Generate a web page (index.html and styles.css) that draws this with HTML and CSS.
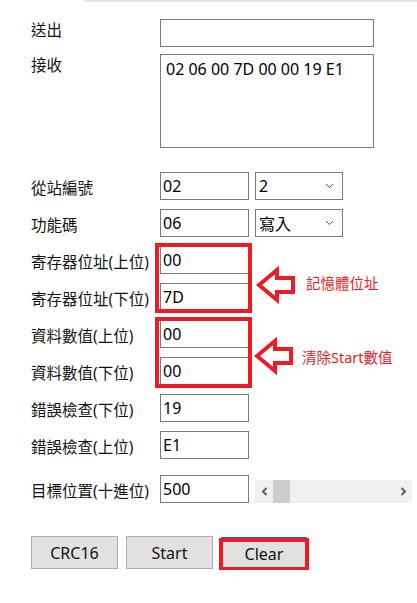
FILE: index.html
```html
<!DOCTYPE html>
<html lang="zh-Hant">
<head>
    <meta charset="UTF-8">
    <meta name="viewport" content="width=device-width, initial-scale=1.0">
    <title>Modbus RTU</title>
    <link rel="stylesheet" href="styles.css">
</head>
<body>
    <div class="topline"></div>
    <form class="panel">
        <div class="row first">
            <span class="lbl top">送出</span>
            <input type="text" class="wide">
        </div>
        <div class="row tall">
            <span class="lbl top">接收</span>
            <textarea class="wide">02 06 00 7D 00 00 19 E1</textarea>
        </div>

        <div class="row after-tall">
            <span class="lbl">從站編號</span>
            <input type="text" value="02">
            <div class="select"><span>2</span><svg width="9" height="6" viewBox="0 0 9 6"><path d="M1 1 L4.5 4.5 L8 1" fill="none" stroke="#555" stroke-width="1"/></svg></div>
        </div>
        <div class="row">
            <span class="lbl">功能碼</span>
            <input type="text" value="06">
            <div class="select"><span>寫入</span><svg width="9" height="6" viewBox="0 0 9 6"><path d="M1 1 L4.5 4.5 L8 1" fill="none" stroke="#555" stroke-width="1"/></svg></div>
        </div>

        <div class="group">
            <span class="lbl">寄存器位址(上位)</span>
            <input type="text" value="00" class="in-a">
            <span class="lbl">寄存器位址(下位)</span>
            <input type="text" value="7D" class="in-b">
            <div class="frame"></div>
            <div class="note">
                <svg width="44" height="38" viewBox="0 0 44 38"><polygon points="6,19 24,4 24,12 40,12 40,26 24,26 24,34" fill="none" stroke="#ed1c24" stroke-width="4"/></svg>
                <span>記憶體位址</span>
            </div>
        </div>

        <div class="group second">
            <span class="lbl">資料數值(上位)</span>
            <input type="text" value="00" class="in-a">
            <span class="lbl">資料數值(下位)</span>
            <input type="text" value="00" class="in-b">
            <div class="frame"></div>
            <div class="note">
                <svg width="44" height="38" viewBox="0 0 44 38"><polygon points="6,19 24,4 24,12 40,12 40,26 24,26 24,34" fill="none" stroke="#ed1c24" stroke-width="4"/></svg>
                <span>清除Start數值</span>
            </div>
        </div>

        <div class="row">
            <span class="lbl">錯誤檢查(下位)</span>
            <input type="text" value="19">
        </div>
        <div class="row">
            <span class="lbl">錯誤檢查(上位)</span>
            <input type="text" value="E1">
        </div>
        <div class="row last">
            <span class="lbl">目標位置(十進位)</span>
            <input type="text" value="500">
            <div class="hscroll">
                <span class="sbtn"><svg width="7" height="9" viewBox="0 0 7 9"><path d="M5.5 1 L2 4.5 L5.5 8" fill="none" stroke="#606060" stroke-width="2"/></svg></span>
                <span class="thumb"></span>
                <span class="track"></span>
                <span class="sbtn"><svg width="7" height="9" viewBox="0 0 7 9"><path d="M1.5 1 L5 4.5 L1.5 8" fill="none" stroke="#606060" stroke-width="2"/></svg></span>
            </div>
        </div>

        <div class="actions">
            <button type="button" class="btn">CRC16</button>
            <button type="button" class="btn">Start</button>
            <span class="mark"><button type="button" class="btn focus">Clear</button></span>
        </div>
    </form>
</body>
</html>
```

FILE: styles.css
```css
body { margin: 0; background: #fff; color: #111; font-family: "Noto Sans", "Noto Sans CJK TC", sans-serif; }
.topline { height: 2px; margin-left: 84px; background: #e3e3e3; }
.panel { padding: 17px 0 0 31px; }

.row { display: grid; grid-template-columns: 129px 95px 1fr; height: 28px; margin-top: 9px; }
.row.first { margin-top: 0; }
.row.tall { height: 94px; margin-top: 7px; }
.row.after-tall { margin-top: 24px; }
.row.last { margin-top: 16px; }

.lbl { font-size: 15.5px; line-height: 22px; white-space: nowrap; align-self: center; padding-top: 3px; }
.lbl.top { align-self: start; padding-top: 0; }

input, textarea { box-sizing: border-box; margin: 0; width: 89px; height: 28px; padding: 0 2px; border: 1px solid #7a7a7a; font-family: inherit; font-size: 16px; color: #000; background: #fff; outline: none; }
.wide { width: 214px; grid-column: 2 / 4; }
textarea { height: 94px; padding: 3px 5px; line-height: 22px; resize: none; }

.select { box-sizing: border-box; width: 88px; height: 28px; border: 1px solid #7a7a7a; display: flex; align-items: center; justify-content: space-between; padding: 0 8px 0 3px; font-size: 16px; color: #000; }

.group { display: grid; grid-template-columns: 129px 95px 1fr; grid-template-rows: 28px 28px; row-gap: 9px; margin-top: 9px; }
.group .in-a { grid-column: 2; grid-row: 1; }
.group .in-b { grid-column: 2; grid-row: 2; }
.frame { grid-column: 2; grid-row: 1 / 3; margin: -3px 3px -2px -5px; border: 4px solid #ed1c24; z-index: 1; pointer-events: none; }
.group.second .frame { margin-bottom: -3px; }
.note { grid-column: 3; grid-row: 1 / 3; display: flex; align-items: flex-start; gap: 9px; margin-left: -2px; padding-top: 20px; color: #ed1c24; font-size: 14.5px; line-height: 20px; white-space: nowrap; }
.note span { margin-top: 7px; }
.group.second .note { padding-top: 17px; margin-left: -4px; gap: 7px; }
.group.second .note span { margin-top: 10px; }

.hscroll { grid-column: 3; width: 157px; height: 23px; align-self: end; display: flex; background: #f0f0f0; }
.sbtn { width: 18px; display: flex; align-items: center; justify-content: center; }
.sbtn:last-child { width: 17px; }
.thumb { width: 17px; background: #cdcdcd; }
.track { flex: 1; }

.actions { display: flex; gap: 8px; margin-top: 33px; }
.btn { box-sizing: border-box; width: 87px; height: 33px; margin: 0; padding: 0; background: #e1e1e1; border: 1px solid #adadad; font-family: inherit; font-size: 16px; color: #111; }
.mark { position: relative; margin-top: 1px; }
.mark::after { content: ""; position: absolute; top: 1px; left: -2px; right: -2px; bottom: -1px; border: 4px solid #ed1c24; }
.btn.focus { width: 86px; border-top-color: #0078d7; }
```
